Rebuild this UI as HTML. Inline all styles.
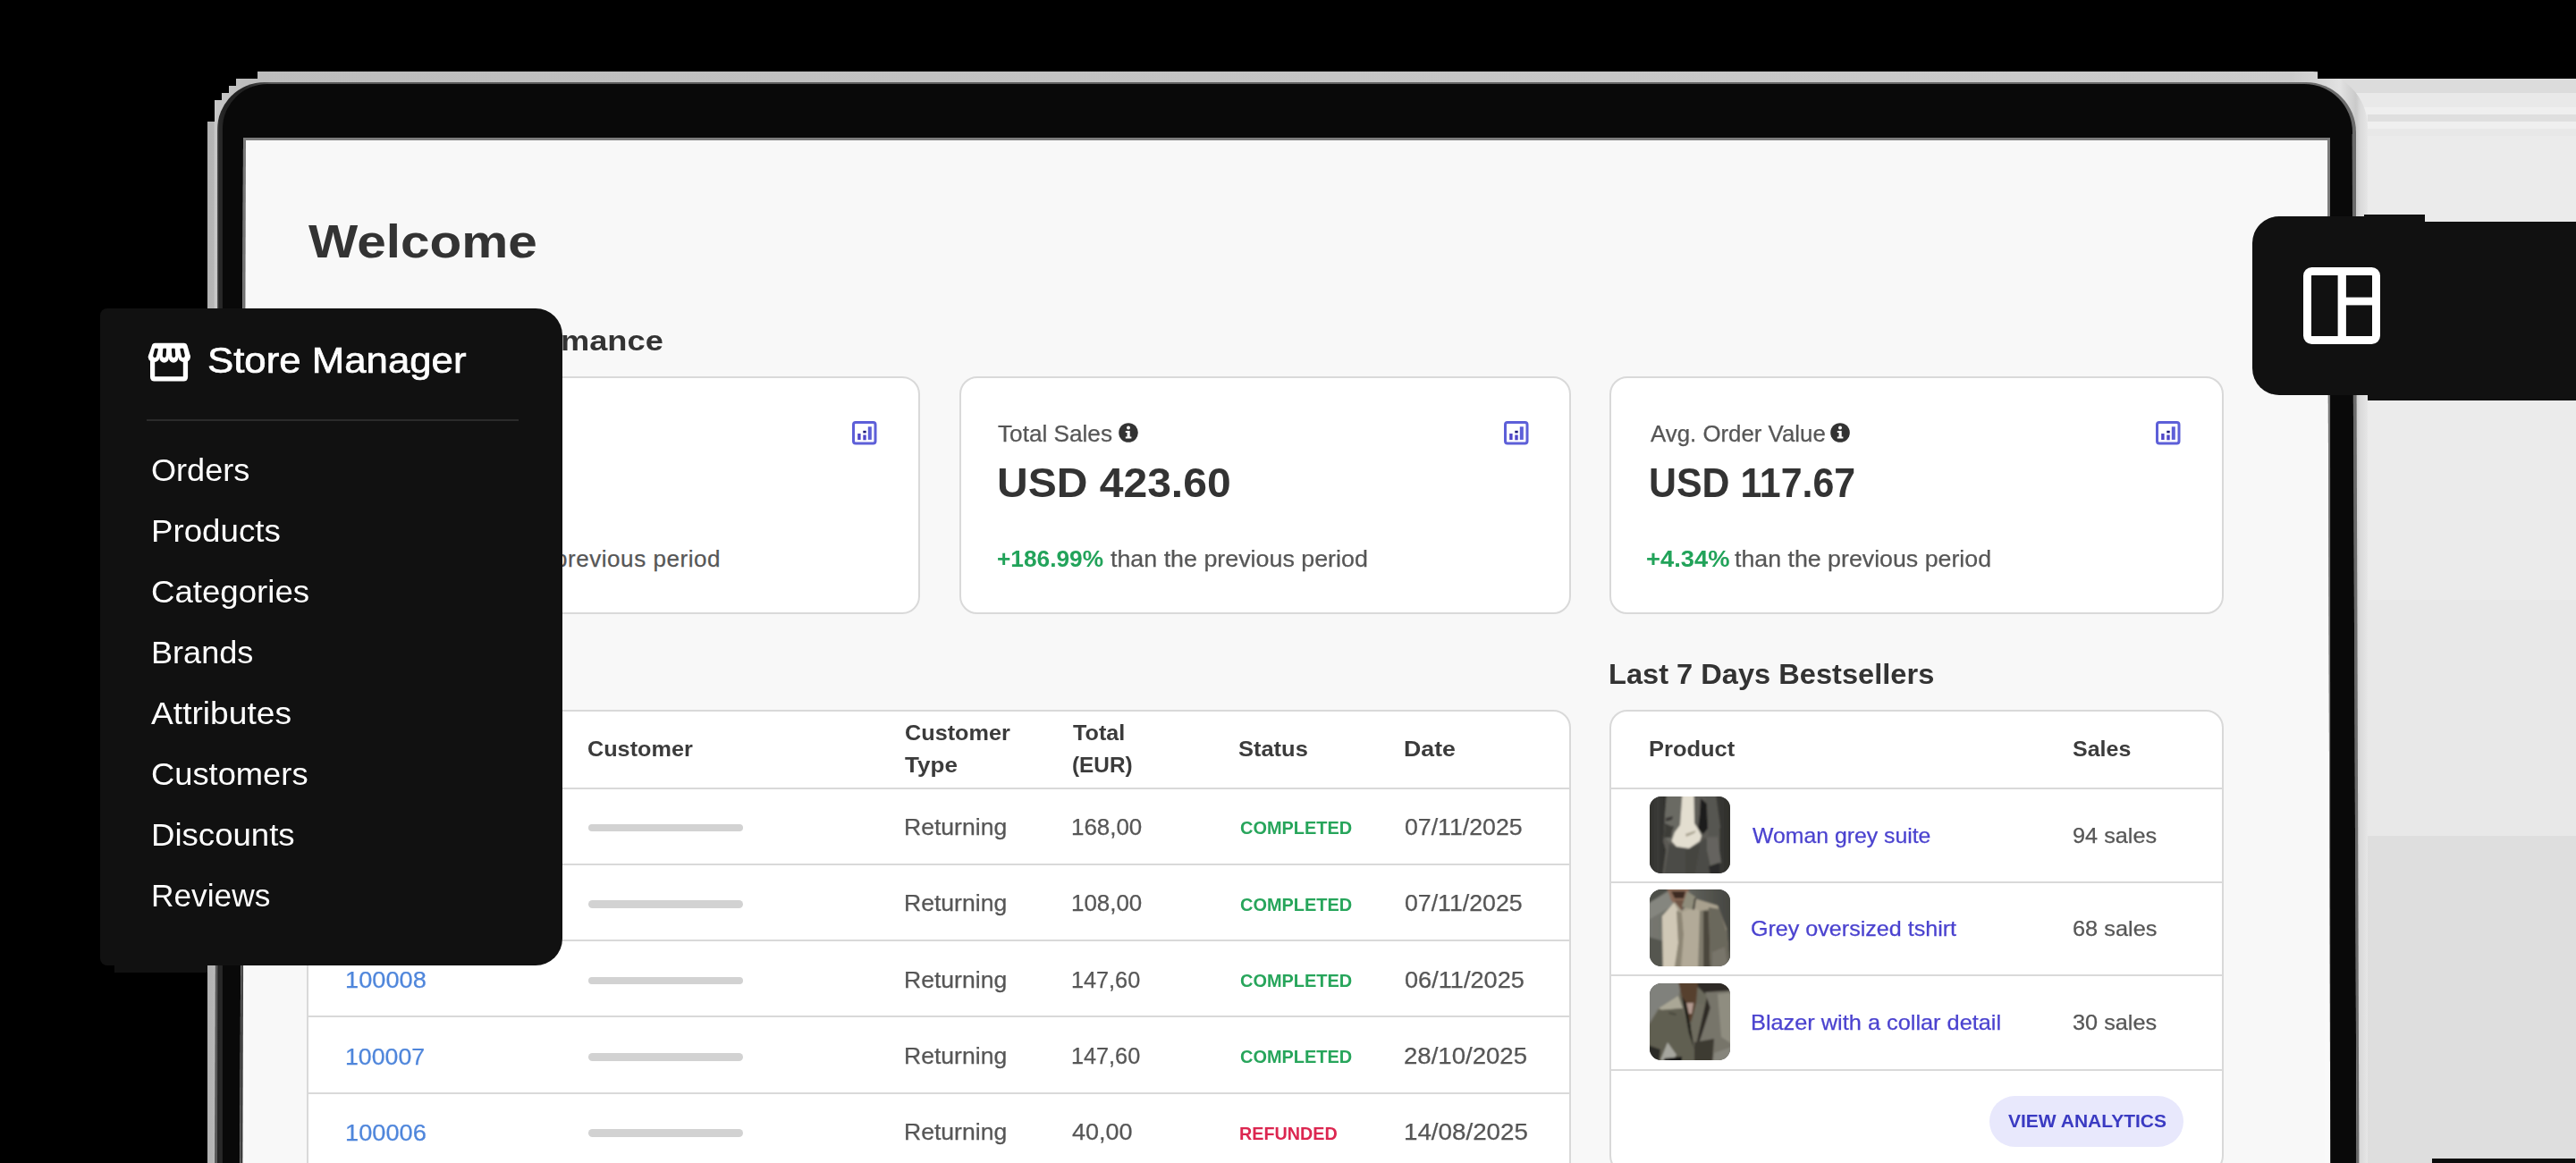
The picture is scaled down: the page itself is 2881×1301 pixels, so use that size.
<!DOCTYPE html>
<html><head><meta charset="utf-8"><title>Store Manager</title>
<style>
html,body{margin:0;padding:0;background:#000;width:2881px;height:1301px;overflow:hidden;}
#page{width:2881px;height:1301px;position:relative;overflow:hidden;background:#000;font-family:"Liberation Sans",sans-serif;}
.t{position:absolute;white-space:nowrap;margin:0;padding:0;}
.b{position:absolute;box-sizing:border-box;}
svg{position:absolute;display:block;overflow:visible;}
</style></head><body><div id="page">
<div class="b " style="left:2592px;top:88px;width:289px;height:1213px;background:#ebebeb;"></div>
<div class="b " style="left:2592px;top:88px;width:289px;height:16px;background:#dcdcdc;"></div>
<div class="b " style="left:2592px;top:104px;width:289px;height:16px;background:#e9e9e9;"></div>
<div class="b " style="left:2592px;top:120px;width:289px;height:8px;background:#efefef;"></div>
<div class="b " style="left:2648px;top:128px;width:233px;height:8px;background:#dfdfdf;"></div>
<div class="b " style="left:2592px;top:136px;width:289px;height:8px;background:#efefef;"></div>
<div class="b " style="left:2592px;top:144px;width:289px;height:8px;background:#e8e8e8;"></div>
<div class="b " style="left:2592px;top:671px;width:289px;height:264px;background:#e8e8e8;"></div>
<div class="b " style="left:2592px;top:935px;width:289px;height:366px;background:#dedede;"></div>
<div class="b " style="left:2720px;top:1296px;width:160px;height:6px;background:#0c0c0c;"></div>
<div class="b " style="left:232px;top:80px;width:2416px;height:1400px;border-radius:34px 62px 0 0;background:linear-gradient(90deg,#b2b2b2 0,#b6b6b6 7px,#c8c8c8 8.5px,#c6c6c6 11px,#bdbdbd 40px,#cccccc 2330px,#d6d6d6 2362px,#e2e2e2 2385px,#cacaca 2403px,#dadada 2408px,#e6e6e6 2416px);"></div>
<div class="b " style="left:232px;top:80px;width:56px;height:8px;background:#000;"></div>
<div class="b " style="left:232px;top:88px;width:32px;height:8px;background:#000;"></div>
<div class="b " style="left:232px;top:96px;width:24px;height:8px;background:#000;"></div>
<div class="b " style="left:232px;top:104px;width:16px;height:8px;background:#000;"></div>
<div class="b " style="left:232px;top:112px;width:8px;height:24px;background:#000;"></div>
<div class="b " style="left:2592px;top:80px;width:60px;height:8px;background:#000;"></div>
<div class="b " style="left:243px;top:91.5px;width:2392px;height:1400px;border-radius:53px 56px 0 0;background:linear-gradient(90deg,#555 0,#2a2a2a 2px,#222 8px,#222 30px,#555 60px,#6a6a6a 100%);"></div>
<div class="b " style="left:248.5px;top:94px;width:2382px;height:1400px;border-radius:50px 54px 0 0;background:#090909;"></div>
<div class="b " style="left:272px;top:154px;width:2334px;height:1200px;background:#f8f8f8;border:3px solid #7c7c7c;border-bottom:none;"></div>
<div class="b " style="left:275px;top:157px;width:3px;height:1200px;background:#fdfdfd;"></div>
<svg style="left:0;top:0" width="2881" height="1301" viewBox="0 0 2881 1301">
<defs><linearGradient id="fade" x1="0" y1="0" x2="0" y2="1"><stop offset="0" stop-color="#7a7a7a"/><stop offset="1" stop-color="#3c3c3c"/></linearGradient></defs>
<polygon points="243.6,150 243.6,1301 240,1301" fill="#5a5a5a"/>
<polygon points="245.5,150 245.5,1301 243,1301" fill="#242424"/>
<polygon points="272,157 278,157 278,1301 268.4,1301" fill="#f9f9f9"/>
<polygon points="272,157 275,157 271.4,1301 268.6,1301" fill="url(#fade)"/>
<polygon points="2600,157 2603,157 2606.3,1301 2600,1301" fill="#f9f9f9"/>
<polygon points="2603,157 2606,157 2606.3,1301 2606.3,1301" fill="#7a7a7a"/>
<polygon points="2606,157 2606,1301 2606.3,1301" fill="#090909"/>
<polygon points="2628,150 2630.6,150 2635.6,1301 2628,1301" fill="#090909"/>
<polygon points="2630.6,150 2634.6,150 2638.4,1301 2635.6,1301" fill="#6a6a6a"/>
</svg>
<div class="t " style="font-size:51.5px;line-height:51.5px;color:#333;top:244.71px;font-weight:bold;left:344.50px;transform:scaleX(1.1365);transform-origin:0 0;">Welcome</div>
<div class="t " style="font-size:31px;line-height:31px;color:#333;top:366.16px;font-weight:bold;left:342.41px;transform:scaleX(1.0436);transform-origin:0 0;">Last 7 Days Perfor</div>
<div class="t " style="font-size:31px;line-height:31px;color:#333;top:366.16px;font-weight:bold;left:627.06px;transform:scaleX(1.1685);transform-origin:0 0;">mance</div>
<div class="b " style="left:344px;top:421px;width:685px;height:266px;background:#fff;border:2px solid #d9d9d9;border-radius:20px;"></div>
<div class="b " style="left:1073px;top:421px;width:684px;height:266px;background:#fff;border:2px solid #d9d9d9;border-radius:20px;"></div>
<div class="b " style="left:1800px;top:421px;width:687px;height:266px;background:#fff;border:2px solid #d9d9d9;border-radius:20px;"></div>
<svg style="left:953px;top:470.5px" width="28" height="27" viewBox="0 0 28 27"><rect x="1.5" y="1.5" width="24.5" height="23.5" rx="2.5" fill="#fff" stroke="#5d5fd8" stroke-width="3"/><rect x="6.2" y="14" width="3.4" height="7" fill="#4f46c8"/><rect x="12.3" y="15.5" width="3.4" height="5.8" fill="#4f46c8"/><rect x="12.3" y="10.8" width="3.4" height="2.6" fill="#1e1b7a"/><rect x="17.8" y="6.3" width="4" height="14.6" fill="#5d5fd8"/></svg>
<svg style="left:1682px;top:470.5px" width="28" height="27" viewBox="0 0 28 27"><rect x="1.5" y="1.5" width="24.5" height="23.5" rx="2.5" fill="#fff" stroke="#5d5fd8" stroke-width="3"/><rect x="6.2" y="14" width="3.4" height="7" fill="#4f46c8"/><rect x="12.3" y="15.5" width="3.4" height="5.8" fill="#4f46c8"/><rect x="12.3" y="10.8" width="3.4" height="2.6" fill="#1e1b7a"/><rect x="17.8" y="6.3" width="4" height="14.6" fill="#5d5fd8"/></svg>
<svg style="left:2410.5px;top:470.5px" width="28" height="27" viewBox="0 0 28 27"><rect x="1.5" y="1.5" width="24.5" height="23.5" rx="2.5" fill="#fff" stroke="#5d5fd8" stroke-width="3"/><rect x="6.2" y="14" width="3.4" height="7" fill="#4f46c8"/><rect x="12.3" y="15.5" width="3.4" height="5.8" fill="#4f46c8"/><rect x="12.3" y="10.8" width="3.4" height="2.6" fill="#1e1b7a"/><rect x="17.8" y="6.3" width="4" height="14.6" fill="#5d5fd8"/></svg>
<div class="t " style="font-size:26px;line-height:26px;color:#565656;top:611.59px;right:2074.97px;-webkit-text-stroke:0.25px #565656;letter-spacing:0.55px;">than the previous period</div>
<div class="t " style="font-size:25px;line-height:25px;color:#565656;top:473.44px;left:1115.78px;transform:scaleX(1.0468);transform-origin:0 0;-webkit-text-stroke:0.25px #565656;">Total Sales</div>
<svg style="left:1251.3px;top:473px" width="22" height="22" viewBox="0 0 22 22"><circle cx="11" cy="11" r="10.8" fill="#333"/><circle cx="11" cy="5.6" r="2" fill="#fff"/><path d="M7.8 9h4.9v6.6h1.7v2H7.8v-2h1.8v-4.6H7.8z" fill="#fff"/></svg>
<div class="t " style="font-size:46px;line-height:46px;color:#333;top:517.36px;font-weight:bold;left:1115.13px;transform:scaleX(1.0439);transform-origin:0 0;">USD 423.60</div>
<div class="t " style="font-size:25px;line-height:25px;color:#565656;top:473.44px;left:1845.50px;transform:scaleX(1.0332);transform-origin:0 0;-webkit-text-stroke:0.25px #565656;">Avg. Order Value</div>
<svg style="left:2046.5px;top:473px" width="22" height="22" viewBox="0 0 22 22"><circle cx="11" cy="11" r="10.8" fill="#333"/><circle cx="11" cy="5.6" r="2" fill="#fff"/><path d="M7.8 9h4.9v6.6h1.7v2H7.8v-2h1.8v-4.6H7.8z" fill="#fff"/></svg>
<div class="t " style="font-size:46px;line-height:46px;color:#333;top:517.36px;font-weight:bold;left:1844.44px;transform:scaleX(0.9316);transform-origin:0 0;">USD 117.67</div>
<div class="t " style="font-size:26px;line-height:26px;color:#22a35a;top:611.59px;font-weight:bold;left:1114.99px;transform:scaleX(1.0108);transform-origin:0 0;">+186.99%</div>
<div class="t " style="font-size:26px;line-height:26px;color:#565656;top:611.59px;left:1241.74px;transform:scaleX(1.0318);transform-origin:0 0;-webkit-text-stroke:0.25px #565656;">than the previous period</div>
<div class="t " style="font-size:26px;line-height:26px;color:#22a35a;top:611.59px;font-weight:bold;left:1840.95px;transform:scaleX(1.0510);transform-origin:0 0;">+4.34%</div>
<div class="t " style="font-size:26px;line-height:26px;color:#565656;top:611.59px;left:1940.04px;transform:scaleX(1.0289);transform-origin:0 0;-webkit-text-stroke:0.25px #565656;">than the previous period</div>
<div class="t " style="font-size:31px;line-height:31px;color:#333;top:738.56px;font-weight:bold;left:1798.80px;transform:scaleX(1.0517);transform-origin:0 0;">Last 7 Days Bestsellers</div>
<div class="b " style="left:343px;top:794px;width:1414px;height:600px;background:#fff;border:2px solid #d9d9d9;border-radius:20px;"></div>
<div class="t " style="font-size:24px;line-height:24px;color:#3b3b3b;top:826.28px;font-weight:bold;left:657.15px;transform:scaleX(1.0510);transform-origin:0 0;">Customer</div>
<div class="t " style="font-size:24px;line-height:24px;color:#3b3b3b;top:808.08px;font-weight:bold;left:1011.65px;transform:scaleX(1.0519);transform-origin:0 0;">Customer</div>
<div class="t " style="font-size:24px;line-height:24px;color:#3b3b3b;top:843.68px;font-weight:bold;left:1012.43px;transform:scaleX(1.0854);transform-origin:0 0;">Type</div>
<div class="t " style="font-size:24px;line-height:24px;color:#3b3b3b;top:808.08px;font-weight:bold;left:1200.24px;transform:scaleX(1.0493);transform-origin:0 0;">Total</div>
<div class="t " style="font-size:24px;line-height:24px;color:#3b3b3b;top:843.68px;font-weight:bold;left:1199.23px;transform:scaleX(1.0148);transform-origin:0 0;">(EUR)</div>
<div class="t " style="font-size:24px;line-height:24px;color:#3b3b3b;top:826.28px;font-weight:bold;left:1385.40px;transform:scaleX(1.0606);transform-origin:0 0;">Status</div>
<div class="t " style="font-size:24px;line-height:24px;color:#3b3b3b;top:826.28px;font-weight:bold;left:1570.13px;transform:scaleX(1.1136);transform-origin:0 0;">Date</div>
<div class="b " style="left:345px;top:880.5px;width:1410px;height:2px;background:#d9d9d9;"></div>
<div class="b " style="left:345px;top:965.6px;width:1410px;height:2px;background:#d9d9d9;"></div>
<div class="b " style="left:345px;top:1050.6px;width:1410px;height:2px;background:#d9d9d9;"></div>
<div class="b " style="left:345px;top:1136.2px;width:1410px;height:2px;background:#d9d9d9;"></div>
<div class="b " style="left:345px;top:1221.6px;width:1410px;height:2px;background:#d9d9d9;"></div>
<div class="t " style="font-size:25px;line-height:25px;color:#4f86db;top:913.64px;left:385.53px;transform:scaleX(1.0845);transform-origin:0 0;-webkit-text-stroke:0.25px #4f86db;">100010</div>
<div class="b " style="left:657.5px;top:921.7px;width:173px;height:8.8px;background:#d2d2d2;border-radius:5px;"></div>
<div class="t " style="font-size:25px;line-height:25px;color:#565656;top:912.84px;left:1011.07px;transform:scaleX(1.0625);transform-origin:0 0;-webkit-text-stroke:0.25px #565656;">Returning</div>
<div class="t " style="font-size:25px;line-height:25px;color:#565656;top:912.84px;left:1197.73px;transform:scaleX(1.0367);transform-origin:0 0;-webkit-text-stroke:0.25px #565656;">168,00</div>
<div class="t " style="font-size:20.8px;line-height:20.8px;color:#27a55b;top:916.19px;font-weight:bold;left:1386.58px;transform:scaleX(0.9592);transform-origin:0 0;">COMPLETED</div>
<div class="t " style="font-size:25px;line-height:25px;color:#565656;top:912.84px;left:1570.73px;transform:scaleX(1.0680);transform-origin:0 0;-webkit-text-stroke:0.25px #565656;">07/11/2025</div>
<div class="t " style="font-size:25px;line-height:25px;color:#4f86db;top:999.04px;left:385.52px;transform:scaleX(1.0879);transform-origin:0 0;-webkit-text-stroke:0.25px #4f86db;">100009</div>
<div class="b " style="left:657.5px;top:1007.1px;width:173px;height:8.8px;background:#d2d2d2;border-radius:5px;"></div>
<div class="t " style="font-size:25px;line-height:25px;color:#565656;top:998.24px;left:1011.07px;transform:scaleX(1.0625);transform-origin:0 0;-webkit-text-stroke:0.25px #565656;">Returning</div>
<div class="t " style="font-size:25px;line-height:25px;color:#565656;top:998.24px;left:1197.73px;transform:scaleX(1.0367);transform-origin:0 0;-webkit-text-stroke:0.25px #565656;">108,00</div>
<div class="t " style="font-size:20.8px;line-height:20.8px;color:#27a55b;top:1001.59px;font-weight:bold;left:1386.58px;transform:scaleX(0.9592);transform-origin:0 0;">COMPLETED</div>
<div class="t " style="font-size:25px;line-height:25px;color:#565656;top:998.24px;left:1570.73px;transform:scaleX(1.0680);transform-origin:0 0;-webkit-text-stroke:0.25px #565656;">07/11/2025</div>
<div class="t " style="font-size:25px;line-height:25px;color:#4f86db;top:1084.44px;left:385.52px;transform:scaleX(1.0879);transform-origin:0 0;-webkit-text-stroke:0.25px #4f86db;">100008</div>
<div class="b " style="left:657.5px;top:1092.5px;width:173px;height:8.8px;background:#d2d2d2;border-radius:5px;"></div>
<div class="t " style="font-size:25px;line-height:25px;color:#565656;top:1083.64px;left:1011.07px;transform:scaleX(1.0625);transform-origin:0 0;-webkit-text-stroke:0.25px #565656;">Returning</div>
<div class="t " style="font-size:25px;line-height:25px;color:#565656;top:1083.64px;left:1197.78px;transform:scaleX(1.0095);transform-origin:0 0;-webkit-text-stroke:0.25px #565656;">147,60</div>
<div class="t " style="font-size:20.8px;line-height:20.8px;color:#27a55b;top:1086.99px;font-weight:bold;left:1386.58px;transform:scaleX(0.9592);transform-origin:0 0;">COMPLETED</div>
<div class="t " style="font-size:25px;line-height:25px;color:#565656;top:1083.64px;left:1570.71px;transform:scaleX(1.0862);transform-origin:0 0;-webkit-text-stroke:0.25px #565656;">06/11/2025</div>
<div class="t " style="font-size:25px;line-height:25px;color:#4f86db;top:1169.84px;left:385.56px;transform:scaleX(1.0679);transform-origin:0 0;-webkit-text-stroke:0.25px #4f86db;">100007</div>
<div class="b " style="left:657.5px;top:1177.9px;width:173px;height:8.8px;background:#d2d2d2;border-radius:5px;"></div>
<div class="t " style="font-size:25px;line-height:25px;color:#565656;top:1169.04px;left:1011.07px;transform:scaleX(1.0625);transform-origin:0 0;-webkit-text-stroke:0.25px #565656;">Returning</div>
<div class="t " style="font-size:25px;line-height:25px;color:#565656;top:1169.04px;left:1197.78px;transform:scaleX(1.0095);transform-origin:0 0;-webkit-text-stroke:0.25px #565656;">147,60</div>
<div class="t " style="font-size:20.8px;line-height:20.8px;color:#27a55b;top:1172.39px;font-weight:bold;left:1386.58px;transform:scaleX(0.9592);transform-origin:0 0;">COMPLETED</div>
<div class="t " style="font-size:25px;line-height:25px;color:#565656;top:1169.04px;left:1570.42px;transform:scaleX(1.1033);transform-origin:0 0;-webkit-text-stroke:0.25px #565656;">28/10/2025</div>
<div class="t " style="font-size:25px;line-height:25px;color:#4f86db;top:1255.24px;left:385.52px;transform:scaleX(1.0879);transform-origin:0 0;-webkit-text-stroke:0.25px #4f86db;">100006</div>
<div class="b " style="left:657.5px;top:1263.3px;width:173px;height:8.8px;background:#d2d2d2;border-radius:5px;"></div>
<div class="t " style="font-size:25px;line-height:25px;color:#565656;top:1254.44px;left:1011.07px;transform:scaleX(1.0625);transform-origin:0 0;-webkit-text-stroke:0.25px #565656;">Returning</div>
<div class="t " style="font-size:25px;line-height:25px;color:#565656;top:1254.44px;left:1199.26px;transform:scaleX(1.0808);transform-origin:0 0;-webkit-text-stroke:0.25px #565656;">40,00</div>
<div class="t " style="font-size:20.8px;line-height:20.8px;color:#dc2650;top:1257.79px;font-weight:bold;left:1386.31px;transform:scaleX(0.9492);transform-origin:0 0;">REFUNDED</div>
<div class="t " style="font-size:25px;line-height:25px;color:#565656;top:1254.44px;left:1569.58px;transform:scaleX(1.1100);transform-origin:0 0;-webkit-text-stroke:0.25px #565656;">14/08/2025</div>
<div class="b " style="left:1800px;top:794px;width:687px;height:519px;background:#fff;border:2px solid #d9d9d9;border-radius:20px;"></div>
<div class="t " style="font-size:24px;line-height:24px;color:#3b3b3b;top:826.28px;font-weight:bold;left:1843.71px;transform:scaleX(1.0618);transform-origin:0 0;">Product</div>
<div class="t " style="font-size:24px;line-height:24px;color:#3b3b3b;top:826.28px;font-weight:bold;left:2318.42px;transform:scaleX(1.0410);transform-origin:0 0;">Sales</div>
<div class="b " style="left:1802px;top:880.5px;width:683px;height:2px;background:#d9d9d9;"></div>
<div class="b " style="left:1802px;top:985.7px;width:683px;height:2px;background:#d9d9d9;"></div>
<div class="b " style="left:1802px;top:1089.8px;width:683px;height:2px;background:#d9d9d9;"></div>
<div class="b " style="left:1802px;top:1195.5px;width:683px;height:2px;background:#d9d9d9;"></div>
<div class="t " style="font-size:24px;line-height:24px;color:#4a42cf;top:922.68px;left:1959.60px;transform:scaleX(1.0333);transform-origin:0 0;-webkit-text-stroke:0.25px #4a42cf;">Woman grey suite</div>
<div class="t " style="font-size:24px;line-height:24px;color:#4a42cf;top:1027.48px;left:1958.29px;transform:scaleX(1.0455);transform-origin:0 0;-webkit-text-stroke:0.25px #4a42cf;">Grey oversized tshirt</div>
<div class="t " style="font-size:24px;line-height:24px;color:#4a42cf;top:1131.88px;left:1957.69px;transform:scaleX(1.0552);transform-origin:0 0;-webkit-text-stroke:0.25px #4a42cf;">Blazer with a collar detail</div>
<div class="t " style="font-size:24px;line-height:24px;color:#565656;top:922.68px;left:2318.25px;transform:scaleX(1.0530);transform-origin:0 0;-webkit-text-stroke:0.25px #565656;">94 sales</div>
<div class="t " style="font-size:24px;line-height:24px;color:#565656;top:1027.48px;left:2317.98px;transform:scaleX(1.0560);transform-origin:0 0;-webkit-text-stroke:0.25px #565656;">68 sales</div>
<div class="t " style="font-size:24px;line-height:24px;color:#565656;top:1131.88px;left:2318.25px;transform:scaleX(1.0530);transform-origin:0 0;-webkit-text-stroke:0.25px #565656;">30 sales</div>
<svg style="left:1845.1px;top:890.7px;border-radius:13px;overflow:hidden" width="90" height="86" viewBox="0 0 90 86"><defs><filter id="bl1" x="-10%" y="-10%" width="120%" height="120%"><feGaussianBlur stdDeviation="1.1"/></filter><linearGradient id="g1" x1="0" x2="1"><stop offset="0" stop-color="#2b2b28"/><stop offset=".14" stop-color="#3b3b38"/><stop offset=".2" stop-color="#33332f"/><stop offset=".8" stop-color="#3a3a36"/><stop offset="1" stop-color="#2a2a27"/></linearGradient></defs><rect width="90" height="86" fill="#444"/><g filter="url(#bl1)"><rect x="-5" y="-5" width="100" height="96" fill="url(#g1)"/>
<path d="M19 -2 L17 30 L15 50 L18 60 L14 90 L70 90 L78 60 L78 30 L72 -2z" fill="#5b5a55"/>
<path d="M19 -2 L38 -2 L35 30 L30 42 L22 52 L16 44 L17 20z" fill="#6b6a64"/><path d="M18 24 L26 22 L25 26 L18 28z M17 36 L27 33 L26 37 L17 40z" fill="#3a3935"/>
<path d="M17 30 L26 34 L24 46 L16 46z" fill="#3e3d39"/>
<path d="M49 -2 L60 -2 L58 20 L54 34 L50 30z" fill="#5d5c57"/>
<path d="M57 2 L64 8 L65 36 L60 42 L54 36 L56 20z" fill="#1f1f1c"/>
<path d="M62 -2 L74 -2 L79 34 L76 44 L66 44 L64 10z" fill="#575651"/>
<path d="M36.5 -2 L49.5 -2 L50 30 L54 36 L58 44 L56 50 L44 58 L30 56 L24.5 50 L28 40 L34 32z" fill="#e3ded0"/>
<path d="M40 42 L52 38 L50 41 L41 45z" fill="#a8a290"/>
<path d="M22 53 L30 57 L44 59 L57 51 L62 46 L66 52 L68 90 L16 90z" fill="#4c4b46"/>
<path d="M40 60 L56 54 L50 90 L40 90z" fill="#45443f"/>
<path d="M64 46 L76 46 L80 74 L68 78 L64 60z" fill="#65645e"/>
<path d="M66 78 L78 74 L78 90 L68 90z" fill="#2c2c29"/></g></svg>
<svg style="left:1845.1px;top:995.3px;border-radius:13px;overflow:hidden" width="90" height="86" viewBox="0 0 90 86"><defs><filter id="bl2" x="-10%" y="-10%" width="120%" height="120%"><feGaussianBlur stdDeviation="1.1"/></filter><linearGradient id="g2" x1="0" y1="0" x2="1" y2="0"><stop offset="0" stop-color="#767770"/><stop offset=".35" stop-color="#70716a"/><stop offset=".6" stop-color="#5a5b55"/><stop offset="1" stop-color="#42433e"/></linearGradient></defs><rect width="90" height="86" fill="#444"/><g filter="url(#bl2)"><rect x="-5" y="-5" width="100" height="96" fill="url(#g2)"/>
<path d="M-5 -5 L30 -5 L-5 18z" fill="#4e4f4a"/>
<path d="M-5 18 L34 -5 L40 -5 L40 10 L-5 36z" fill="#85867f"/>
<path d="M-5 52 L16 58 L16 92 L-5 92z" fill="#555650"/>
<path d="M19 -2 L44 -2 L42 14 L32 22 L24 12z" fill="#8a6b59"/>
<path d="M24 2 L40 2 L38 10 L28 10z" fill="#3c2c24"/>
<path d="M28 12 L40 12 L36 24 L30 22z" fill="#6e5445"/>
<path d="M14 30 L28 14 L36 24 L50 10 L76 18 L86 44 L90 92 L15 92z" fill="#a8a08e"/>
<path d="M14 30 L27 15 L31 22 L32 60 L28 92 L15 92z" fill="#d0c8b6"/>
<path d="M30 24 L36 26 L38 50 L34 92 L27 92 L32 60z" fill="#8d8675"/>
<path d="M36 26 L50 20 L58 26 L56 92 L36 92 L38 50z" fill="#b2aa98"/>
<path d="M42 2 L52 9 L49 23 L36 19z" fill="#908d7c"/>
<path d="M48 22 L50 10 L52 9 L50 23z" fill="#3c3a33"/>
<path d="M56 24 L66 22 L68 60 L66 92 L54 92z" fill="#7f7a6c"/>
<path d="M60 24 L66 24 L68 92 L60 92z" fill="#4b473d"/>
<path d="M66 20 L78 22 L87 50 L90 92 L68 92z" fill="#6b675b"/>
<path d="M70 70 L84 64 L88 92 L70 92z" fill="#78746a"/></g></svg>
<svg style="left:1845.1px;top:1100.3px;border-radius:13px;overflow:hidden" width="90" height="86" viewBox="0 0 90 86"><defs><filter id="bl3" x="-10%" y="-10%" width="120%" height="120%"><feGaussianBlur stdDeviation="1.1"/></filter></defs><rect width="90" height="86" fill="#444"/><g filter="url(#bl3)"><rect x="-5" y="-5" width="100" height="96" fill="#6b695c"/>
<path d="M-5 -5 L36 -5 L32 18 L10 28 L-5 52z" fill="#80817b"/>
<path d="M34 -5 L95 -5 L95 10 L62 12 L54 4z" fill="#2f2b25"/>
<path d="M32 -2 L54 -2 L52 22 L46 44 L36 16z" fill="#57402f"/>
<path d="M41 22 L49 22 L47 34 L44 34z" fill="#b39a90"/>
<path d="M10 28 L32 14 L37 28 L14 30z" fill="#aaa796"/>
<path d="M10 30 L36 28 L50 74 L52 92 L-5 92 L-5 54z" fill="#605e51"/>
<path d="M22 32 L30 34 L29 36 L21 34z" fill="#4a483e"/>
<path d="M36 15 L41 22 L48 60 L50 74 L44 56z" fill="#1d1a15"/>
<path d="M52 22 L66 24 L56 56 L50 74 L46 50z" fill="#6e6c5f"/>
<path d="M64 16 L68 26 L58 60 L51 76 L54 60z" fill="#2e2c25"/>
<path d="M62 10 L95 8 L95 92 L54 92 L52 76 L68 28z" fill="#77756a"/>
<path d="M76 12 L95 10 L95 70 L80 60z" fill="#8f8d80"/>
<path d="M50 66 L72 62 L70 92 L50 92z" fill="#3d3a33"/>
<path d="M12 86 L20 66 L30 80 L26 86z" fill="#a6a69e"/>
<path d="M-5 68 L12 74 L10 92 L-5 92z" fill="#2b2a26"/>
<path d="M16 84 L36 82 L36 92 L16 92z" fill="#191815"/>
<path d="M72 78 L95 70 L95 92 L70 92z" fill="#86857c"/></g></svg>
<div class="b " style="left:2225px;top:1225.5px;width:217px;height:57px;background:#e8e8fc;border-radius:29px;"></div>
<div class="t " style="font-size:20.6px;line-height:20.6px;color:#3a3ac2;top:1243.76px;font-weight:bold;left:2245.54px;transform:scaleX(1.0201);transform-origin:0 0;">VIEW ANALYTICS</div>
<div class="b " style="left:112px;top:345px;width:517px;height:735px;background:#111111;border-radius:8px 30px 30px 8px;"></div>
<div class="b " style="left:128px;top:1070px;width:104px;height:18px;background:#111111;"></div>
<svg style="left:165px;top:383px" width="49" height="45" viewBox="0 0 49 45">
<rect x="3" y="13" width="42.1" height="30.6" rx="4.5" fill="#fff"/>
<rect x="8.2" y="16" width="31.6" height="22.2" fill="#111"/>
<path d="M8.4 0.8 H41 a3.6 3.6 0 0 1 3.5 2.7 L47.9 15.5 V17 H0.8 V15.5 L4.9 3.5 A3.6 3.6 0 0 1 8.4 0.8z" fill="#fff"/>
<ellipse cx="7.1" cy="16.5" rx="6.3" ry="5.6" fill="#fff"/>
<ellipse cx="18.6" cy="16.7" rx="5.4" ry="6" fill="#fff"/>
<ellipse cx="29.1" cy="16.7" rx="5.4" ry="6" fill="#fff"/>
<ellipse cx="41.2" cy="16.5" rx="6.7" ry="5.6" fill="#fff"/>
<g stroke="#111" stroke-width="3.9" stroke-linecap="round">
<path d="M9.9 7.8 L8.1 15"/><path d="M19.2 7.8 L18.7 15"/><path d="M28.8 7.8 L29.3 15"/><path d="M38.3 7.8 L39.9 15"/></g>
<rect x="7" y="5.2" width="34" height="1.5" fill="#fff"/>
</svg>
<div class="t " style="font-size:40.5px;line-height:40.5px;color:#fff;top:382.92px;left:231.81px;transform:scaleX(1.0806);transform-origin:0 0;-webkit-text-stroke:0.7px #fff;">Store Manager</div>
<div class="b " style="left:163.5px;top:469px;width:416px;height:1.6px;background:#2b2b2b;"></div>
<div class="t " style="font-size:34.6px;line-height:34.6px;color:#fff;top:508.51px;left:168.80px;transform:scaleX(1.0446);transform-origin:0 0;">Orders</div>
<div class="t " style="font-size:34.6px;line-height:34.6px;color:#fff;top:576.61px;left:168.80px;transform:scaleX(1.0615);transform-origin:0 0;">Products</div>
<div class="t " style="font-size:34.6px;line-height:34.6px;color:#fff;top:644.71px;left:168.80px;transform:scaleX(1.0592);transform-origin:0 0;">Categories</div>
<div class="t " style="font-size:34.6px;line-height:34.6px;color:#fff;top:712.81px;left:168.80px;transform:scaleX(1.0444);transform-origin:0 0;">Brands</div>
<div class="t " style="font-size:34.6px;line-height:34.6px;color:#fff;top:780.91px;left:168.80px;transform:scaleX(1.0754);transform-origin:0 0;">Attributes</div>
<div class="t " style="font-size:34.6px;line-height:34.6px;color:#fff;top:849.01px;left:168.80px;transform:scaleX(1.0502);transform-origin:0 0;">Customers</div>
<div class="t " style="font-size:34.6px;line-height:34.6px;color:#fff;top:917.11px;left:168.80px;transform:scaleX(1.0582);transform-origin:0 0;">Discounts</div>
<div class="t " style="font-size:34.6px;line-height:34.6px;color:#fff;top:985.21px;left:168.80px;transform:scaleX(1.0202);transform-origin:0 0;">Reviews</div>
<div class="b " style="left:2519px;top:241.5px;width:130px;height:200.5px;background:#111111;border-radius:30px 0 0 30px;"></div>
<div class="b " style="left:2643.5px;top:240px;width:68.3px;height:10px;background:#111111;"></div>
<div class="b " style="left:2648px;top:247.5px;width:233px;height:200px;background:#111111;"></div>
<svg style="left:2576px;top:299px" width="86" height="86" viewBox="0 0 86 86">
<rect x="4.5" y="4.5" width="77" height="77" rx="5" fill="none" stroke="#fff" stroke-width="9"/>
<rect x="38.6" y="4" width="9.3" height="78" fill="#fff"/>
<rect x="43" y="33.6" width="39" height="8.8" fill="#fff"/>
</svg>
</div></body></html>
